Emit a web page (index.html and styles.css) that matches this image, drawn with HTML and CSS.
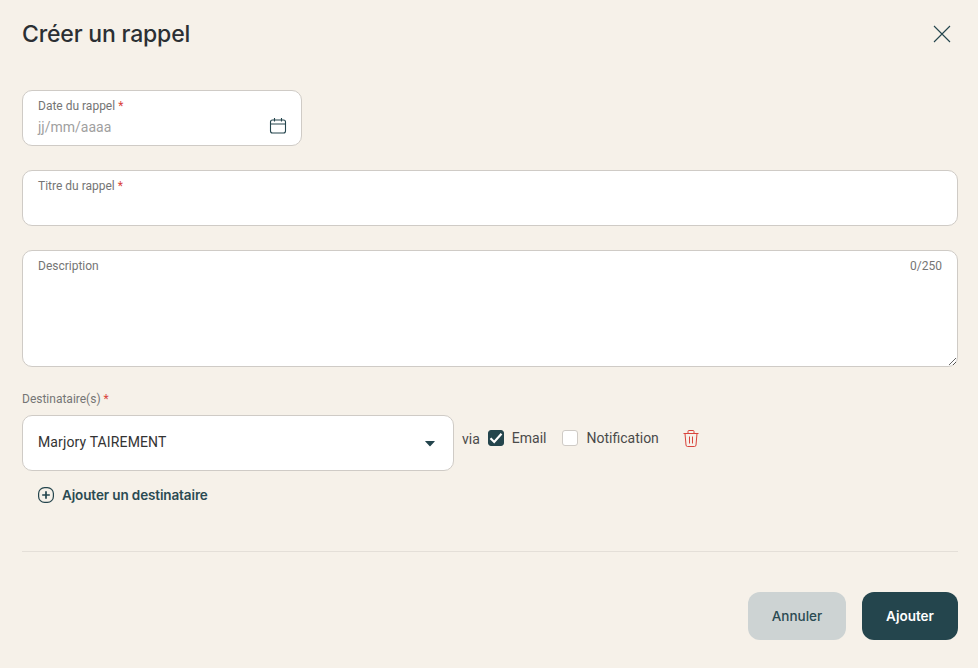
FILE: index.html
```html
<!DOCTYPE html>
<html lang="fr">
<head>
<meta charset="utf-8">
<title>Créer un rappel</title>
<link rel="stylesheet" href="styles.css">
</head>
<body>
<main class="dialog">
  <header class="head">
    <h1 class="title">Créer un rappel</h1>
    <button class="close" aria-label="Fermer">
      <svg width="18" height="18" viewBox="0 0 18 18"><path d="M1 1 17 17M17 1 1 17" fill="none" stroke="#24454d" stroke-width="1.1"/></svg>
    </button>
  </header>

  <div class="field field-date">
    <span class="label">Date du rappel <em class="req">*</em></span>
    <span class="placeholder">jj/mm/aaaa</span>
    <svg class="cal" width="18" height="18" viewBox="0 0 18 18" fill="none" stroke="#24454d" stroke-width="1.1"><rect x="1.5" y="3" width="15" height="13" rx="2"/><path d="M1.5 7h15M5.5 1v3.5M12.500 1v3.500"/></svg>
  </div>

  <div class="field field-title">
    <span class="label">Titre du rappel <em class="req">*</em></span>
  </div>

  <div class="field field-desc">
    <span class="label">Description</span>
    <span class="count">0/250</span>
    <textarea class="area" aria-label="Description"></textarea>
  </div>

  <div class="group-label">Destinataire(s) <em class="req">*</em></div>
  <div class="recipient">
    <div class="select">
      <span>Marjory TAIREMENT</span>
      <svg width="10" height="6" viewBox="0 0 10 6"><path d="M0 .5Q0 0 .6 0h8.800q.6 0 .3.6L5.500 5Q5 5.500 4.500 5L.3.600z" fill="#24454d"/></svg>
    </div>
    <span class="via">via</span>
    <label class="check"><span class="box on"><svg width="14" height="12" viewBox="0 0 14 12"><path d="M1.500 6.200 5.200 10 12.500 1.800" fill="none" stroke="#fff" stroke-width="2.200"/></svg></span>Email</label>
    <label class="check"><span class="box"></span>Notification</label>
    <svg class="trash" width="16" height="17" viewBox="0 0 16 17" fill="none" stroke="#d9443c" stroke-width="1"><path d="M.5 3.500h15M5 3.500V1.500q0-1 1-1h4q1 0 1 1v2M2 3.500l1 11.500q.1 1.500 1.500 1.500h7q1.400 0 1.500-1.500l1-11.500M6.500 6.500v7M9.500 6.500v7"/></svg>
  </div>

  <div class="add">
    <svg width="16" height="16" viewBox="0 0 16 16" fill="none" stroke="#24454d"><rect x=".6" y=".6" width="14.800" height="14.800" rx="6" stroke-width="1.200"/><path d="M8 4.200v7.600M4.200 8h7.600" stroke-width="1.700"/></svg>
    <span>Ajouter un destinataire</span>
  </div>

  <hr class="rule">

  <footer class="actions">
    <button class="btn btn-cancel">Annuler</button>
    <button class="btn btn-ok">Ajouter</button>
  </footer>
</main>
</body>
</html>
```

FILE: styles.css
```css
* { box-sizing: border-box; }
html, body { margin: 0; height: 100%; }
body {
  background: #f6f1e9;
  font-family: Roboto, "Liberation Sans", sans-serif;
  color: #333;
  overflow: hidden;
}
.dialog { padding: 0 20px 0 22px; display: flex; flex-direction: column; }
.head { height: 90px; display: flex; justify-content: space-between; align-items: flex-start; }
.title {
  margin: 19px 0 0;
  font: 550 23px/30px Inter, "Noto Sans", sans-serif;
  letter-spacing: -0.18px;
  color: #2b2f33;
}
.close { margin: 25px 7px 0 0; padding: 0; border: 0; background: none; width: 18px; height: 18px; display: block; }
.close svg { display: block; }

.field {
  position: relative;
  background: #fff;
  border: 1px solid #cfcbc6;
  border-radius: 10px;
  padding: 8px 15px;
  margin-bottom: 24px;
  height: 56px;
}
.field-date { width: 280px; }
.field-desc { height: 117px; margin-bottom: 24px; }
.label { display: block; font-size: 12px; line-height: 14px; color: #757575; }
.req { font-style: normal; color: #d9443c; }
.placeholder { display: block; margin-top: 6px; font-size: 14px; line-height: 16px; color: #a0a0a0; letter-spacing: 0; }
.cal { position: absolute; right: 14px; top: 26px; }
.count { position: absolute; right: 15px; top: 8px; font-size: 12px; line-height: 14px; color: #757575; }
.area {
  position: absolute; inset: 26px 0 0 0;
  width: 100%; height: calc(100% - 26px);
  border: 0; outline: 0; background: none; border-radius: 0 0 10px 10px;
  resize: vertical; padding: 0;
}

.group-label { font-size: 12px; line-height: 14px; color: #757575; margin: 1px 0 9px; }
.recipient { display: flex; align-items: flex-start; }
.select {
  width: 432px; height: 56px;
  display: flex; align-items: center; justify-content: space-between;
  background: #fff; border: 1px solid #cfcbc6; border-radius: 10px;
  padding: 0 18px 2px 15px;
  font-size: 14px; letter-spacing: .13px; color: #333;
}
.select svg { margin-top: 3px; }
.via { margin: 16px 0 0 8px; font-size: 14px; line-height: 16px; color: #4a4a4a; }
.check { display: flex; align-items: center; margin: 15px 0 0 8px; font-size: 14px; line-height: 16px; color: #4a4a4a; }
.check + .check { margin-left: 16px; }
.box {
  width: 16px; height: 16px; margin-right: 8px;
  background: #fff; border: 1px solid #cfcbc6; border-radius: 3px;
  display: flex; align-items: center; justify-content: center;
}
.box.on { background: #24454d; border-color: #24454d; }
.trash { margin: 15px 0 0 24px; }

.add {
  display: flex; align-items: center; gap: 8px;
  margin: 16px 0 0 16px; height: 16px;
  font: 560 13.500px/16px Inter, "Noto Sans", sans-serif;
  letter-spacing: -.12px;
  color: #2a4a52;
}
.rule { width: 100%; margin: 48px 0 40px; border: 0; border-top: 1px solid #e4dfd8; }
.actions { display: flex; justify-content: flex-end; gap: 16px; }
.btn {
  height: 48px; border: 0; border-radius: 12px; padding: 0 0 1px;
  font: 540 13.500px/16px Inter, "Noto Sans", sans-serif;
}
.btn-cancel { width: 98px; background: #cdd3d3; color: #2a4a52; }
.btn-ok { width: 96px; background: #24454d; color: #fff; font-weight: 620; }
```
